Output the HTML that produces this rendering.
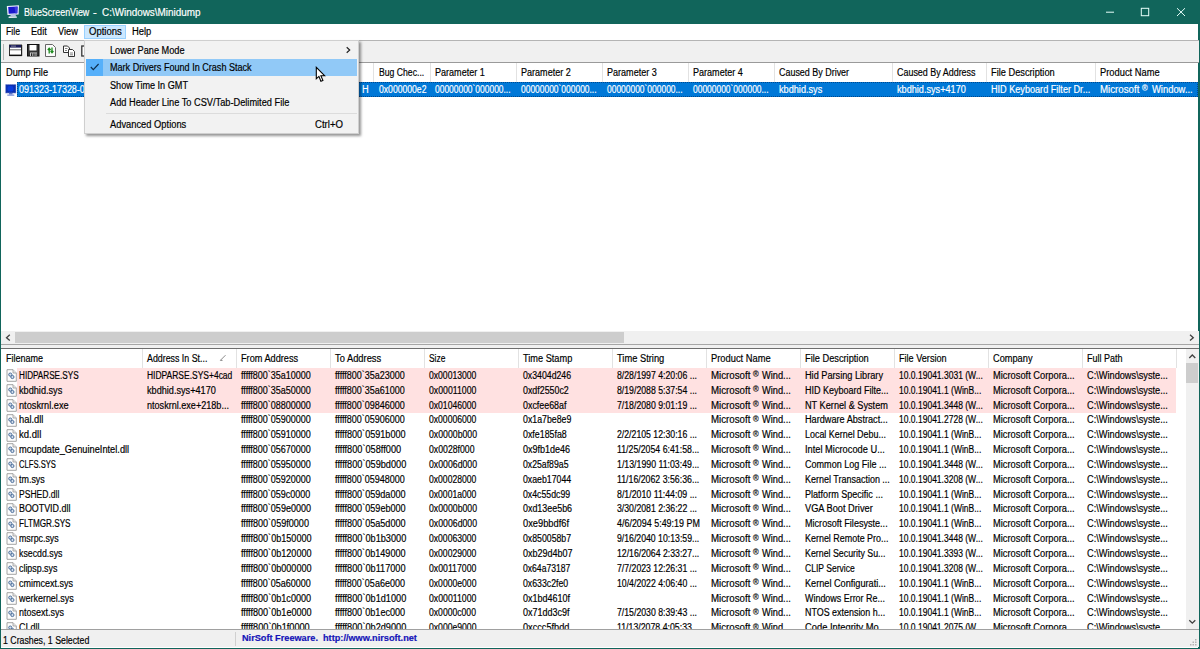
<!DOCTYPE html>
<html lang="en"><head><meta charset="utf-8"><title>BlueScreenView - C:\Windows\Minidump</title>
<style>
html,body{margin:0;padding:0;width:1200px;height:649px;overflow:hidden;background:#fff}
body{font-family:"Liberation Sans",sans-serif;font-size:10.0px;color:#000;position:relative}
.a{position:absolute}
.t{position:absolute;white-space:pre;line-height:14px;height:14px;transform-origin:0 50%;-webkit-text-stroke:.18px currentColor}
.w{color:#fff}
.r{font-size:6.500px;position:relative;top:-2.500px}
</style></head><body>

<div class="a" style="left:0px;top:0px;width:1200px;height:649px;background:#11655b;"></div>
<div class="a" style="left:1.3px;top:23.75px;width:1197.2px;height:623.75px;background:#fff;"></div>
<svg class="a" style="left:6px;top:5px" width="14" height="14" viewBox="0 0 14 14">
<path d="M.800 1L13 .300L12.600 9.500L1.500 10Z" fill="#eef0ff"/>
<path d="M2.200 2.100L11.600 1.600L11.300 8.300L2.700 8.700Z" fill="#1818cc"/>
<path d="M8.500 2L11.600 1.700L11.300 8.300L9.500 8.400Z" fill="#3a3ae0"/>
<path d="M5 9.500L9.500 9.300L10 11.300L4 11.600Z" fill="#b8c0e8"/>
<path d="M2.800 11.500L10.500 11.200L11 12.800L2.500 13.100Z" fill="#eef0fa"/>
</svg>
<span class="t w" style="left:23.6px;top:6.20px;transform:scaleX(0.892);">BlueScreenView</span>
<span class="t w" style="left:92.8px;top:6.20px;transform:scaleX(1.126);">-</span>
<span class="t w" style="left:102.4px;top:6.20px;transform:scaleX(0.990);">C:\Windows\Minidump</span>
<svg class="a" style="left:1100px;top:0" width="100" height="24" viewBox="0 0 100 24">
<path d="M6 12.200H14" stroke="#e8fffb" stroke-width="1" fill="none"/>
<rect x="41.300" y="8.300" width="7.400" height="7.400" stroke="#e8fffb" stroke-width="1" fill="none"/>
<path d="M77 8.200L85 16M85 8.200L77 16" stroke="#e8fffb" stroke-width="1" fill="none"/>
</svg>
<div class="a" style="left:83.75px;top:24.5px;width:42.5px;height:14.8px;background:#cce8ff;box-shadow:inset 0 0 0 1px #99d1ff"></div>
<span class="t" style="left:6.2px;top:24.70px;transform:scaleX(0.870);">File</span>
<span class="t" style="left:31.2px;top:24.70px;transform:scaleX(0.911);">Edit</span>
<span class="t" style="left:58px;top:24.70px;transform:scaleX(0.920);">View</span>
<span class="t" style="left:88.8px;top:24.70px;transform:scaleX(0.952);">Options</span>
<span class="t" style="left:132.2px;top:24.70px;transform:scaleX(0.940);">Help</span>
<div class="a" style="left:1px;top:40px;width:1197.5px;height:22.5px;background:#f0f0f0;"></div>
<div class="a" style="left:1px;top:40px;width:1197.5px;height:1px;background:#b4b4b4;"></div>
<div class="a" style="left:1px;top:62px;width:1197.5px;height:1px;background:#9a9a9a;"></div>
<div class="a" style="left:2.5px;top:44px;width:1px;height:16px;background:#b4b4b4;"></div>
<svg class="a" style="left:8px;top:43px" width="80" height="16" viewBox="0 0 80 16">
<g>
<rect x="1.500" y="2" width="12" height="10.500" fill="#fff" stroke="#333" stroke-width="1"/>
<rect x="1.500" y="2" width="12" height="2.600" fill="#1a1a5a"/>
<rect x="3" y="2.700" width="5" height=".800" fill="#99a"/>
<rect x="2" y="6.300" width="11" height="1" fill="#666"/>
<rect x="1.500" y="11.600" width="12.500" height="1.500" fill="#111"/>
<rect x="13" y="2" width="1.200" height="11" fill="#222"/>
</g>
<g transform="translate(18,0)">
<rect x="1.500" y="1.500" width="11.500" height="11.500" fill="#333" stroke="#111"/>
<rect x="3.500" y="2" width="7" height="5.500" fill="#fff"/>
<rect x="4" y="9.500" width="7" height="3.500" fill="#ccc"/>
<rect x="5" y="10.300" width="1.300" height="2.700" fill="#222"/><rect x="7.300" y="10.300" width="1.300" height="2.700" fill="#222"/><rect x="9.500" y="10.300" width="1" height="2.700" fill="#222"/>
</g>
<g transform="translate(36,0)">
<path d="M1.500 1.500H8.500L11.500 4.500V13.500H1.500Z" fill="#fbfbfb" stroke="#666"/>
<path d="M5.200 10.500V5.500M3.800 7L5.200 5.200L6.600 7" stroke="#1e8a1e" stroke-width="1.300" fill="none"/>
<path d="M8 4.500V9.500M6.600 8L8 9.800L9.400 8" stroke="#1e8a1e" stroke-width="1.300" fill="none"/>
</g>
<g transform="translate(54,0)">
<path d="M1.500 3H5.500L7.500 5V9.500H1.500Z" fill="#fff" stroke="#333"/>
<path d="M6.500 6.500H10.500L12.500 8.500V13.500H6.500Z" fill="#fff" stroke="#333"/>
<path d="M3 5.500h2.500M3 7.500h2M8 10h3M8 11.800h3" stroke="#666" stroke-width=".8"/>
</g>
<g transform="translate(72,0)"><rect x="1.800" y="3" width="8" height="10" fill="#fff" stroke="#333" stroke-width="1.300"/></g>
</svg>
<div class="a" style="left:373px;top:63px;width:1px;height:18.5px;background:#e2e2e2;"></div>
<div class="a" style="left:430px;top:63px;width:1px;height:18.5px;background:#e2e2e2;"></div>
<div class="a" style="left:516px;top:63px;width:1px;height:18.5px;background:#e2e2e2;"></div>
<div class="a" style="left:602px;top:63px;width:1px;height:18.5px;background:#e2e2e2;"></div>
<div class="a" style="left:688px;top:63px;width:1px;height:18.5px;background:#e2e2e2;"></div>
<div class="a" style="left:774px;top:63px;width:1px;height:18.5px;background:#e2e2e2;"></div>
<div class="a" style="left:892px;top:63px;width:1px;height:18.5px;background:#e2e2e2;"></div>
<div class="a" style="left:986px;top:63px;width:1px;height:18.5px;background:#e2e2e2;"></div>
<div class="a" style="left:1095px;top:63px;width:1px;height:18.5px;background:#e2e2e2;"></div>
<span class="t" style="left:6.2px;top:65.80px;transform:scaleX(0.923);">Dump File</span>
<span class="t" style="left:378.6px;top:65.80px;transform:scaleX(0.865);">Bug Chec...</span>
<span class="t" style="left:435px;top:65.80px;transform:scaleX(0.904);">Parameter 1</span>
<span class="t" style="left:521px;top:65.80px;transform:scaleX(0.904);">Parameter 2</span>
<span class="t" style="left:607px;top:65.80px;transform:scaleX(0.904);">Parameter 3</span>
<span class="t" style="left:693px;top:65.80px;transform:scaleX(0.904);">Parameter 4</span>
<span class="t" style="left:779px;top:65.80px;transform:scaleX(0.894);">Caused By Driver</span>
<span class="t" style="left:897px;top:65.80px;transform:scaleX(0.894);">Caused By Address</span>
<span class="t" style="left:991px;top:65.80px;transform:scaleX(0.924);">File Description</span>
<span class="t" style="left:1100.3px;top:65.80px;transform:scaleX(0.933);">Product Name</span>
<div class="a" style="left:17.3px;top:81.8px;width:1180.7px;height:14.8px;background:#0078d7;outline:1px dotted rgba(0,25,70,.5);outline-offset:-1px"></div>
<svg class="a" style="left:5px;top:83.500px" width="12" height="13" viewBox="0 0 12 13">
<rect x="0.400" y="0.300" width="10.700" height="8.900" fill="#2b47b4"/>
<rect x="1.100" y="1" width="9.300" height="7.500" fill="#0a2fb0"/>
<rect x="2.500" y="2" width="6" height="5.500" rx="2" fill="#0a3cdc"/>
<rect x="0.400" y="0.300" width="10.700" height="8.900" fill="none" stroke="#c8d2f0" stroke-width=".7" stroke-dasharray="1 1" opacity=".8"/>
<rect x="4" y="9.200" width="3.500" height="1.300" fill="#3a57c0"/><rect x="2.300" y="10.500" width="7" height="1.300" fill="#7f93da"/>
</svg>
<span class="t w" style="left:19px;top:83.00px;transform:scaleX(0.897);">091323-17328-01.dmp</span>
<span class="t w" style="left:378.6px;top:83.00px;transform:scaleX(0.862);">0x000000e2</span>
<span class="t w" style="left:435px;top:83.00px;transform:scaleX(0.844);">00000000`000000...</span>
<span class="t w" style="left:521px;top:83.00px;transform:scaleX(0.844);">00000000`000000...</span>
<span class="t w" style="left:607px;top:83.00px;transform:scaleX(0.844);">00000000`000000...</span>
<span class="t w" style="left:693px;top:83.00px;transform:scaleX(0.844);">00000000`000000...</span>
<span class="t w" style="left:779px;top:83.00px;transform:scaleX(0.916);">kbdhid.sys</span>
<span class="t w" style="left:897px;top:83.00px;transform:scaleX(0.914);">kbdhid.sys+4170</span>
<span class="t w" style="left:991px;top:83.00px;transform:scaleX(0.911);">HID Keyboard Filter Dr...</span>
<span class="t w" style="left:1100.3px;top:83.00px;transform:scaleX(0.970);">Microsoft</span>
<span class="t w" style="left:1141.5px;top:81.40px;transform:scaleX(0.896);font-size:8.500px">®</span>
<span class="t w" style="left:1151.5px;top:83.00px;transform:scaleX(0.939);">Window...</span>
<span class="t w" style="left:237.121px;top:83.00px;transform:scaleX(0.858);">MANUALLY_INITIATED_CRAS</span>
<span class="t w" style="left:361.6px;top:83.00px;transform:scaleX(0.922);">H</span>
<span class="t w" style="left:124px;top:83.00px;transform:scaleX(0.890);">9/13/2023 8:41:23 PM</span>
<div class="a" style="left:1px;top:331.3px;width:1197.5px;height:12.6px;background:#f0f0f0;"></div>
<div class="a" style="left:15px;top:331.8px;width:609px;height:11.6px;background:#cdcdcd;"></div>
<svg class="a" style="left:1px;top:331px" width="14" height="13"><path d="M8.800 3.800L5.500 6.700l3.300 2.900" stroke="#404040" stroke-width="1.300" fill="none"/></svg>
<svg class="a" style="left:1185px;top:331px" width="14" height="13"><path d="M5 3.800L8.300 6.700 5 9.600" stroke="#404040" stroke-width="1.300" fill="none"/></svg>
<div class="a" style="left:1px;top:344px;width:1197.5px;height:4.5px;background:#f0f0f0;"></div>
<div class="a" style="left:1px;top:344px;width:1197.5px;height:1px;background:#a6a6a6;"></div>
<div class="a" style="left:1px;top:348px;width:1197.5px;height:1px;background:#6e6e6e;"></div>
<div class="a" style="left:142px;top:349px;width:1px;height:18.5px;background:#e2e2e2;"></div>
<div class="a" style="left:236px;top:349px;width:1px;height:18.5px;background:#e2e2e2;"></div>
<div class="a" style="left:330px;top:349px;width:1px;height:18.5px;background:#e2e2e2;"></div>
<div class="a" style="left:424px;top:349px;width:1px;height:18.5px;background:#e2e2e2;"></div>
<div class="a" style="left:518px;top:349px;width:1px;height:18.5px;background:#e2e2e2;"></div>
<div class="a" style="left:612px;top:349px;width:1px;height:18.5px;background:#e2e2e2;"></div>
<div class="a" style="left:706px;top:349px;width:1px;height:18.5px;background:#e2e2e2;"></div>
<div class="a" style="left:800px;top:349px;width:1px;height:18.5px;background:#e2e2e2;"></div>
<div class="a" style="left:894px;top:349px;width:1px;height:18.5px;background:#e2e2e2;"></div>
<div class="a" style="left:988px;top:349px;width:1px;height:18.5px;background:#e2e2e2;"></div>
<div class="a" style="left:1082px;top:349px;width:1px;height:18.5px;background:#e2e2e2;"></div>
<div class="a" style="left:1176px;top:349px;width:1px;height:18.5px;background:#e2e2e2;"></div>
<span class="t" style="left:6.2px;top:351.50px;transform:scaleX(0.901);">Filename</span>
<span class="t" style="left:147.4px;top:351.50px;transform:scaleX(0.883);">Address In St...</span>
<span class="t" style="left:241.4px;top:351.50px;transform:scaleX(0.918);">From Address</span>
<span class="t" style="left:335.4px;top:351.50px;transform:scaleX(0.933);">To Address</span>
<span class="t" style="left:429.4px;top:351.50px;transform:scaleX(0.843);">Size</span>
<span class="t" style="left:523.4px;top:351.50px;transform:scaleX(0.920);">Time Stamp</span>
<span class="t" style="left:617.4px;top:351.50px;transform:scaleX(0.931);">Time String</span>
<span class="t" style="left:711.4px;top:351.50px;transform:scaleX(0.933);">Product Name</span>
<span class="t" style="left:805.4px;top:351.50px;transform:scaleX(0.924);">File Description</span>
<span class="t" style="left:899.4px;top:351.50px;transform:scaleX(0.911);">File Version</span>
<span class="t" style="left:993.4px;top:351.50px;transform:scaleX(0.923);">Company</span>
<span class="t" style="left:1087.4px;top:351.50px;transform:scaleX(0.899);">Full Path</span>
<svg class="a" style="left:219px;top:354px" width="9" height="8"><path d="M1.500 6.200L6.500 1.200" stroke="#8a8a8a" stroke-width="1" fill="none"/><path d="M1.200 6.400h2.300" stroke="#8a8a8a" stroke-width="1"/></svg>
<div class="a" style="left:17px;top:368.1px;width:1159.3px;height:14.9px;background:#ffe1e1;"></div>
<svg class="a" style="left:5.500px;top:369.10px" width="12" height="13" viewBox="0 0 12 13"><path d="M1 .700H7L10.300 4V12.300H1Z" fill="#fdfdfd" stroke="#9a9a9a" stroke-width=".9"/><path d="M7 .700V4H10.300" fill="#e8e8e8" stroke="#9a9a9a" stroke-width=".8"/><circle cx="4.300" cy="5.600" r="1.600" fill="#d5deea" stroke="#4b6f9c" stroke-width="1"/><circle cx="6.400" cy="8" r="1.600" fill="#d5deea" stroke="#4b6f9c" stroke-width="1"/></svg>
<span class="t" style="left:19px;top:368.80px;transform:scaleX(0.814);">HIDPARSE.SYS</span>
<span class="t" style="left:147.4px;top:368.80px;transform:scaleX(0.847);">HIDPARSE.SYS+4cad</span>
<span class="t" style="left:241.4px;top:368.80px;transform:scaleX(0.898);">fffff800`35a10000</span>
<span class="t" style="left:335.4px;top:368.80px;transform:scaleX(0.898);">fffff800`35a23000</span>
<span class="t" style="left:429.4px;top:368.80px;transform:scaleX(0.860);">0x00013000</span>
<span class="t" style="left:523.4px;top:368.80px;transform:scaleX(0.873);">0x3404d246</span>
<span class="t" style="left:617.4px;top:368.80px;transform:scaleX(0.872);">8/28/1997 4:20:06 ...</span>
<span class="t" style="left:711.4px;top:368.80px;transform:scaleX(0.970);">Microsoft</span>
<span class="t" style="left:752.6px;top:367.20px;transform:scaleX(0.896);font-size:8.500px">®</span>
<span class="t" style="left:762.2px;top:368.80px;transform:scaleX(0.926);">Wind...</span>
<span class="t" style="left:805.4px;top:368.80px;transform:scaleX(0.917);">Hid Parsing Library</span>
<span class="t" style="left:899.4px;top:368.80px;transform:scaleX(0.851);">10.0.19041.3031 (W...</span>
<span class="t" style="left:993.4px;top:368.80px;transform:scaleX(0.930);">Microsoft Corpora...</span>
<span class="t" style="left:1087.4px;top:368.80px;transform:scaleX(0.921);">C:\Windows\syste...</span>
<div class="a" style="left:17px;top:382.95px;width:1159.3px;height:14.9px;background:#ffe1e1;"></div>
<svg class="a" style="left:5.500px;top:383.95px" width="12" height="13" viewBox="0 0 12 13"><path d="M1 .700H7L10.300 4V12.300H1Z" fill="#fdfdfd" stroke="#9a9a9a" stroke-width=".9"/><path d="M7 .700V4H10.300" fill="#e8e8e8" stroke="#9a9a9a" stroke-width=".8"/><circle cx="4.300" cy="5.600" r="1.600" fill="#d5deea" stroke="#4b6f9c" stroke-width="1"/><circle cx="6.400" cy="8" r="1.600" fill="#d5deea" stroke="#4b6f9c" stroke-width="1"/></svg>
<span class="t" style="left:19px;top:383.65px;transform:scaleX(0.916);">kbdhid.sys</span>
<span class="t" style="left:147.4px;top:383.65px;transform:scaleX(0.914);">kbdhid.sys+4170</span>
<span class="t" style="left:241.4px;top:383.65px;transform:scaleX(0.898);">fffff800`35a50000</span>
<span class="t" style="left:335.4px;top:383.65px;transform:scaleX(0.898);">fffff800`35a61000</span>
<span class="t" style="left:429.4px;top:383.65px;transform:scaleX(0.872);">0x00011000</span>
<span class="t" style="left:523.4px;top:383.65px;transform:scaleX(0.885);">0xdf2550c2</span>
<span class="t" style="left:617.4px;top:383.65px;transform:scaleX(0.872);">8/19/2088 5:37:54 ...</span>
<span class="t" style="left:711.4px;top:383.65px;transform:scaleX(0.970);">Microsoft</span>
<span class="t" style="left:752.6px;top:382.05px;transform:scaleX(0.896);font-size:8.500px">®</span>
<span class="t" style="left:762.2px;top:383.65px;transform:scaleX(0.926);">Wind...</span>
<span class="t" style="left:805.4px;top:383.65px;transform:scaleX(0.900);">HID Keyboard Filte...</span>
<span class="t" style="left:899.4px;top:383.65px;transform:scaleX(0.851);">10.0.19041.1 (WinB...</span>
<span class="t" style="left:993.4px;top:383.65px;transform:scaleX(0.930);">Microsoft Corpora...</span>
<span class="t" style="left:1087.4px;top:383.65px;transform:scaleX(0.921);">C:\Windows\syste...</span>
<div class="a" style="left:17px;top:397.8px;width:1159.3px;height:14.9px;background:#ffe1e1;"></div>
<svg class="a" style="left:5.500px;top:398.80px" width="12" height="13" viewBox="0 0 12 13"><path d="M1 .700H7L10.300 4V12.300H1Z" fill="#fdfdfd" stroke="#9a9a9a" stroke-width=".9"/><path d="M7 .700V4H10.300" fill="#e8e8e8" stroke="#9a9a9a" stroke-width=".8"/><circle cx="4.300" cy="5.600" r="1.600" fill="#d5deea" stroke="#4b6f9c" stroke-width="1"/><circle cx="6.400" cy="8" r="1.600" fill="#d5deea" stroke="#4b6f9c" stroke-width="1"/></svg>
<span class="t" style="left:19px;top:398.50px;transform:scaleX(0.920);">ntoskrnl.exe</span>
<span class="t" style="left:147.4px;top:398.50px;transform:scaleX(0.907);">ntoskrnl.exe+218b...</span>
<span class="t" style="left:241.4px;top:398.50px;transform:scaleX(0.899);">fffff800`08800000</span>
<span class="t" style="left:335.4px;top:398.50px;transform:scaleX(0.899);">fffff800`09846000</span>
<span class="t" style="left:429.4px;top:398.50px;transform:scaleX(0.860);">0x01046000</span>
<span class="t" style="left:523.4px;top:398.50px;transform:scaleX(0.888);">0xcfee68af</span>
<span class="t" style="left:617.4px;top:398.50px;transform:scaleX(0.872);">7/18/2080 9:01:19 ...</span>
<span class="t" style="left:711.4px;top:398.50px;transform:scaleX(0.970);">Microsoft</span>
<span class="t" style="left:752.6px;top:396.90px;transform:scaleX(0.896);font-size:8.500px">®</span>
<span class="t" style="left:762.2px;top:398.50px;transform:scaleX(0.926);">Wind...</span>
<span class="t" style="left:805.4px;top:398.50px;transform:scaleX(0.917);">NT Kernel &amp; System</span>
<span class="t" style="left:899.4px;top:398.50px;transform:scaleX(0.851);">10.0.19041.3448 (W...</span>
<span class="t" style="left:993.4px;top:398.50px;transform:scaleX(0.930);">Microsoft Corpora...</span>
<span class="t" style="left:1087.4px;top:398.50px;transform:scaleX(0.921);">C:\Windows\syste...</span>
<svg class="a" style="left:5.500px;top:413.65px" width="12" height="13" viewBox="0 0 12 13"><path d="M1 .700H7L10.300 4V12.300H1Z" fill="#fdfdfd" stroke="#9a9a9a" stroke-width=".9"/><path d="M7 .700V4H10.300" fill="#e8e8e8" stroke="#9a9a9a" stroke-width=".8"/><circle cx="4.300" cy="5.600" r="1.600" fill="#d5deea" stroke="#4b6f9c" stroke-width="1"/><circle cx="6.400" cy="8" r="1.600" fill="#d5deea" stroke="#4b6f9c" stroke-width="1"/></svg>
<span class="t" style="left:19px;top:413.35px;transform:scaleX(0.935);">hal.dll</span>
<span class="t" style="left:241.4px;top:413.35px;transform:scaleX(0.899);">fffff800`05900000</span>
<span class="t" style="left:335.4px;top:413.35px;transform:scaleX(0.899);">fffff800`05906000</span>
<span class="t" style="left:429.4px;top:413.35px;transform:scaleX(0.860);">0x00006000</span>
<span class="t" style="left:523.4px;top:413.35px;transform:scaleX(0.877);">0x1a7be8e9</span>
<span class="t" style="left:711.4px;top:413.35px;transform:scaleX(0.970);">Microsoft</span>
<span class="t" style="left:752.6px;top:411.75px;transform:scaleX(0.896);font-size:8.500px">®</span>
<span class="t" style="left:762.2px;top:413.35px;transform:scaleX(0.926);">Wind...</span>
<span class="t" style="left:805.4px;top:413.35px;transform:scaleX(0.914);">Hardware Abstract...</span>
<span class="t" style="left:899.4px;top:413.35px;transform:scaleX(0.851);">10.0.19041.2728 (W...</span>
<span class="t" style="left:993.4px;top:413.35px;transform:scaleX(0.930);">Microsoft Corpora...</span>
<span class="t" style="left:1087.4px;top:413.35px;transform:scaleX(0.921);">C:\Windows\syste...</span>
<svg class="a" style="left:5.500px;top:428.50px" width="12" height="13" viewBox="0 0 12 13"><path d="M1 .700H7L10.300 4V12.300H1Z" fill="#fdfdfd" stroke="#9a9a9a" stroke-width=".9"/><path d="M7 .700V4H10.300" fill="#e8e8e8" stroke="#9a9a9a" stroke-width=".8"/><circle cx="4.300" cy="5.600" r="1.600" fill="#d5deea" stroke="#4b6f9c" stroke-width="1"/><circle cx="6.400" cy="8" r="1.600" fill="#d5deea" stroke="#4b6f9c" stroke-width="1"/></svg>
<span class="t" style="left:19px;top:428.20px;transform:scaleX(0.953);">kd.dll</span>
<span class="t" style="left:241.4px;top:428.20px;transform:scaleX(0.899);">fffff800`05910000</span>
<span class="t" style="left:335.4px;top:428.20px;transform:scaleX(0.908);">fffff800`0591b000</span>
<span class="t" style="left:429.4px;top:428.20px;transform:scaleX(0.873);">0x0000b000</span>
<span class="t" style="left:523.4px;top:428.20px;transform:scaleX(0.884);">0xfe185fa8</span>
<span class="t" style="left:617.4px;top:428.20px;transform:scaleX(0.872);">2/2/2105 12:30:16 ...</span>
<span class="t" style="left:711.4px;top:428.20px;transform:scaleX(0.970);">Microsoft</span>
<span class="t" style="left:752.6px;top:426.60px;transform:scaleX(0.896);font-size:8.500px">®</span>
<span class="t" style="left:762.2px;top:428.20px;transform:scaleX(0.926);">Wind...</span>
<span class="t" style="left:805.4px;top:428.20px;transform:scaleX(0.893);">Local Kernel Debu...</span>
<span class="t" style="left:899.4px;top:428.20px;transform:scaleX(0.851);">10.0.19041.1 (WinB...</span>
<span class="t" style="left:993.4px;top:428.20px;transform:scaleX(0.930);">Microsoft Corpora...</span>
<span class="t" style="left:1087.4px;top:428.20px;transform:scaleX(0.921);">C:\Windows\syste...</span>
<svg class="a" style="left:5.500px;top:443.35px" width="12" height="13" viewBox="0 0 12 13"><path d="M1 .700H7L10.300 4V12.300H1Z" fill="#fdfdfd" stroke="#9a9a9a" stroke-width=".9"/><path d="M7 .700V4H10.300" fill="#e8e8e8" stroke="#9a9a9a" stroke-width=".8"/><circle cx="4.300" cy="5.600" r="1.600" fill="#d5deea" stroke="#4b6f9c" stroke-width="1"/><circle cx="6.400" cy="8" r="1.600" fill="#d5deea" stroke="#4b6f9c" stroke-width="1"/></svg>
<span class="t" style="left:19px;top:443.05px;transform:scaleX(0.926);">mcupdate_GenuineIntel.dll</span>
<span class="t" style="left:241.4px;top:443.05px;transform:scaleX(0.899);">fffff800`05670000</span>
<span class="t" style="left:335.4px;top:443.05px;transform:scaleX(0.919);">fffff800`058ff000</span>
<span class="t" style="left:429.4px;top:443.05px;transform:scaleX(0.871);">0x0028f000</span>
<span class="t" style="left:523.4px;top:443.05px;transform:scaleX(0.901);">0x9fb1de46</span>
<span class="t" style="left:617.4px;top:443.05px;transform:scaleX(0.877);">11/25/2054 6:41:58...</span>
<span class="t" style="left:711.4px;top:443.05px;transform:scaleX(0.970);">Microsoft</span>
<span class="t" style="left:752.6px;top:441.45px;transform:scaleX(0.896);font-size:8.500px">®</span>
<span class="t" style="left:762.2px;top:443.05px;transform:scaleX(0.926);">Wind...</span>
<span class="t" style="left:805.4px;top:443.05px;transform:scaleX(0.927);">Intel Microcode U...</span>
<span class="t" style="left:899.4px;top:443.05px;transform:scaleX(0.851);">10.0.19041.1 (WinB...</span>
<span class="t" style="left:993.4px;top:443.05px;transform:scaleX(0.930);">Microsoft Corpora...</span>
<span class="t" style="left:1087.4px;top:443.05px;transform:scaleX(0.921);">C:\Windows\syste...</span>
<svg class="a" style="left:5.500px;top:458.20px" width="12" height="13" viewBox="0 0 12 13"><path d="M1 .700H7L10.300 4V12.300H1Z" fill="#fdfdfd" stroke="#9a9a9a" stroke-width=".9"/><path d="M7 .700V4H10.300" fill="#e8e8e8" stroke="#9a9a9a" stroke-width=".8"/><circle cx="4.300" cy="5.600" r="1.600" fill="#d5deea" stroke="#4b6f9c" stroke-width="1"/><circle cx="6.400" cy="8" r="1.600" fill="#d5deea" stroke="#4b6f9c" stroke-width="1"/></svg>
<span class="t" style="left:19px;top:457.90px;transform:scaleX(0.764);">CLFS.SYS</span>
<span class="t" style="left:241.4px;top:457.90px;transform:scaleX(0.899);">fffff800`05950000</span>
<span class="t" style="left:335.4px;top:457.90px;transform:scaleX(0.917);">fffff800`059bd000</span>
<span class="t" style="left:429.4px;top:457.90px;transform:scaleX(0.873);">0x0006d000</span>
<span class="t" style="left:523.4px;top:457.90px;transform:scaleX(0.870);">0x25af89a5</span>
<span class="t" style="left:617.4px;top:457.90px;transform:scaleX(0.877);">1/13/1990 11:03:49...</span>
<span class="t" style="left:711.4px;top:457.90px;transform:scaleX(0.970);">Microsoft</span>
<span class="t" style="left:752.6px;top:456.30px;transform:scaleX(0.896);font-size:8.500px">®</span>
<span class="t" style="left:762.2px;top:457.90px;transform:scaleX(0.926);">Wind...</span>
<span class="t" style="left:805.4px;top:457.90px;transform:scaleX(0.905);">Common Log File ...</span>
<span class="t" style="left:899.4px;top:457.90px;transform:scaleX(0.851);">10.0.19041.3448 (W...</span>
<span class="t" style="left:993.4px;top:457.90px;transform:scaleX(0.930);">Microsoft Corpora...</span>
<span class="t" style="left:1087.4px;top:457.90px;transform:scaleX(0.921);">C:\Windows\syste...</span>
<svg class="a" style="left:5.500px;top:473.05px" width="12" height="13" viewBox="0 0 12 13"><path d="M1 .700H7L10.300 4V12.300H1Z" fill="#fdfdfd" stroke="#9a9a9a" stroke-width=".9"/><path d="M7 .700V4H10.300" fill="#e8e8e8" stroke="#9a9a9a" stroke-width=".8"/><circle cx="4.300" cy="5.600" r="1.600" fill="#d5deea" stroke="#4b6f9c" stroke-width="1"/><circle cx="6.400" cy="8" r="1.600" fill="#d5deea" stroke="#4b6f9c" stroke-width="1"/></svg>
<span class="t" style="left:19px;top:472.75px;transform:scaleX(0.892);">tm.sys</span>
<span class="t" style="left:241.4px;top:472.75px;transform:scaleX(0.899);">fffff800`05920000</span>
<span class="t" style="left:335.4px;top:472.75px;transform:scaleX(0.899);">fffff800`05948000</span>
<span class="t" style="left:429.4px;top:472.75px;transform:scaleX(0.860);">0x00028000</span>
<span class="t" style="left:523.4px;top:472.75px;transform:scaleX(0.875);">0xaeb17044</span>
<span class="t" style="left:617.4px;top:472.75px;transform:scaleX(0.877);">11/16/2062 3:56:36...</span>
<span class="t" style="left:711.4px;top:472.75px;transform:scaleX(0.970);">Microsoft</span>
<span class="t" style="left:752.6px;top:471.15px;transform:scaleX(0.896);font-size:8.500px">®</span>
<span class="t" style="left:762.2px;top:472.75px;transform:scaleX(0.926);">Wind...</span>
<span class="t" style="left:805.4px;top:472.75px;transform:scaleX(0.898);">Kernel Transaction ...</span>
<span class="t" style="left:899.4px;top:472.75px;transform:scaleX(0.851);">10.0.19041.3208 (W...</span>
<span class="t" style="left:993.4px;top:472.75px;transform:scaleX(0.930);">Microsoft Corpora...</span>
<span class="t" style="left:1087.4px;top:472.75px;transform:scaleX(0.921);">C:\Windows\syste...</span>
<svg class="a" style="left:5.500px;top:487.90px" width="12" height="13" viewBox="0 0 12 13"><path d="M1 .700H7L10.300 4V12.300H1Z" fill="#fdfdfd" stroke="#9a9a9a" stroke-width=".9"/><path d="M7 .700V4H10.300" fill="#e8e8e8" stroke="#9a9a9a" stroke-width=".8"/><circle cx="4.300" cy="5.600" r="1.600" fill="#d5deea" stroke="#4b6f9c" stroke-width="1"/><circle cx="6.400" cy="8" r="1.600" fill="#d5deea" stroke="#4b6f9c" stroke-width="1"/></svg>
<span class="t" style="left:19px;top:487.60px;transform:scaleX(0.853);">PSHED.dll</span>
<span class="t" style="left:241.4px;top:487.60px;transform:scaleX(0.899);">fffff800`059c0000</span>
<span class="t" style="left:335.4px;top:487.60px;transform:scaleX(0.908);">fffff800`059da000</span>
<span class="t" style="left:429.4px;top:487.60px;transform:scaleX(0.860);">0x0001a000</span>
<span class="t" style="left:523.4px;top:487.60px;transform:scaleX(0.875);">0x4c55dc99</span>
<span class="t" style="left:617.4px;top:487.60px;transform:scaleX(0.879);">8/1/2010 11:44:09 ...</span>
<span class="t" style="left:711.4px;top:487.60px;transform:scaleX(0.970);">Microsoft</span>
<span class="t" style="left:752.6px;top:486.00px;transform:scaleX(0.896);font-size:8.500px">®</span>
<span class="t" style="left:762.2px;top:487.60px;transform:scaleX(0.926);">Wind...</span>
<span class="t" style="left:805.4px;top:487.60px;transform:scaleX(0.905);">Platform Specific ...</span>
<span class="t" style="left:899.4px;top:487.60px;transform:scaleX(0.851);">10.0.19041.1 (WinB...</span>
<span class="t" style="left:993.4px;top:487.60px;transform:scaleX(0.930);">Microsoft Corpora...</span>
<span class="t" style="left:1087.4px;top:487.60px;transform:scaleX(0.921);">C:\Windows\syste...</span>
<svg class="a" style="left:5.500px;top:502.75px" width="12" height="13" viewBox="0 0 12 13"><path d="M1 .700H7L10.300 4V12.300H1Z" fill="#fdfdfd" stroke="#9a9a9a" stroke-width=".9"/><path d="M7 .700V4H10.300" fill="#e8e8e8" stroke="#9a9a9a" stroke-width=".8"/><circle cx="4.300" cy="5.600" r="1.600" fill="#d5deea" stroke="#4b6f9c" stroke-width="1"/><circle cx="6.400" cy="8" r="1.600" fill="#d5deea" stroke="#4b6f9c" stroke-width="1"/></svg>
<span class="t" style="left:19px;top:502.45px;transform:scaleX(0.889);">BOOTVID.dll</span>
<span class="t" style="left:241.4px;top:502.45px;transform:scaleX(0.900);">fffff800`059e0000</span>
<span class="t" style="left:335.4px;top:502.45px;transform:scaleX(0.910);">fffff800`059eb000</span>
<span class="t" style="left:429.4px;top:502.45px;transform:scaleX(0.873);">0x0000b000</span>
<span class="t" style="left:523.4px;top:502.45px;transform:scaleX(0.891);">0xd13ee5b6</span>
<span class="t" style="left:617.4px;top:502.45px;transform:scaleX(0.872);">3/30/2081 2:36:22 ...</span>
<span class="t" style="left:711.4px;top:502.45px;transform:scaleX(0.970);">Microsoft</span>
<span class="t" style="left:752.6px;top:500.85px;transform:scaleX(0.896);font-size:8.500px">®</span>
<span class="t" style="left:762.2px;top:502.45px;transform:scaleX(0.926);">Wind...</span>
<span class="t" style="left:805.4px;top:502.45px;transform:scaleX(0.923);">VGA Boot Driver</span>
<span class="t" style="left:899.4px;top:502.45px;transform:scaleX(0.851);">10.0.19041.1 (WinB...</span>
<span class="t" style="left:993.4px;top:502.45px;transform:scaleX(0.930);">Microsoft Corpora...</span>
<span class="t" style="left:1087.4px;top:502.45px;transform:scaleX(0.921);">C:\Windows\syste...</span>
<svg class="a" style="left:5.500px;top:517.60px" width="12" height="13" viewBox="0 0 12 13"><path d="M1 .700H7L10.300 4V12.300H1Z" fill="#fdfdfd" stroke="#9a9a9a" stroke-width=".9"/><path d="M7 .700V4H10.300" fill="#e8e8e8" stroke="#9a9a9a" stroke-width=".8"/><circle cx="4.300" cy="5.600" r="1.600" fill="#d5deea" stroke="#4b6f9c" stroke-width="1"/><circle cx="6.400" cy="8" r="1.600" fill="#d5deea" stroke="#4b6f9c" stroke-width="1"/></svg>
<span class="t" style="left:19px;top:517.30px;transform:scaleX(0.816);">FLTMGR.SYS</span>
<span class="t" style="left:241.4px;top:517.30px;transform:scaleX(0.907);">fffff800`059f0000</span>
<span class="t" style="left:335.4px;top:517.30px;transform:scaleX(0.908);">fffff800`05a5d000</span>
<span class="t" style="left:429.4px;top:517.30px;transform:scaleX(0.873);">0x0006d000</span>
<span class="t" style="left:523.4px;top:517.30px;transform:scaleX(0.929);">0xe9bbdf6f</span>
<span class="t" style="left:617.4px;top:517.30px;transform:scaleX(0.892);">4/6/2094 5:49:19 PM</span>
<span class="t" style="left:711.4px;top:517.30px;transform:scaleX(0.970);">Microsoft</span>
<span class="t" style="left:752.6px;top:515.70px;transform:scaleX(0.896);font-size:8.500px">®</span>
<span class="t" style="left:762.2px;top:517.30px;transform:scaleX(0.926);">Wind...</span>
<span class="t" style="left:805.4px;top:517.30px;transform:scaleX(0.907);">Microsoft Filesyste...</span>
<span class="t" style="left:899.4px;top:517.30px;transform:scaleX(0.851);">10.0.19041.1 (WinB...</span>
<span class="t" style="left:993.4px;top:517.30px;transform:scaleX(0.930);">Microsoft Corpora...</span>
<span class="t" style="left:1087.4px;top:517.30px;transform:scaleX(0.921);">C:\Windows\syste...</span>
<svg class="a" style="left:5.500px;top:532.45px" width="12" height="13" viewBox="0 0 12 13"><path d="M1 .700H7L10.300 4V12.300H1Z" fill="#fdfdfd" stroke="#9a9a9a" stroke-width=".9"/><path d="M7 .700V4H10.300" fill="#e8e8e8" stroke="#9a9a9a" stroke-width=".8"/><circle cx="4.300" cy="5.600" r="1.600" fill="#d5deea" stroke="#4b6f9c" stroke-width="1"/><circle cx="6.400" cy="8" r="1.600" fill="#d5deea" stroke="#4b6f9c" stroke-width="1"/></svg>
<span class="t" style="left:19px;top:532.15px;transform:scaleX(0.882);">msrpc.sys</span>
<span class="t" style="left:241.4px;top:532.15px;transform:scaleX(0.908);">fffff800`0b150000</span>
<span class="t" style="left:335.4px;top:532.15px;transform:scaleX(0.917);">fffff800`0b1b3000</span>
<span class="t" style="left:429.4px;top:532.15px;transform:scaleX(0.860);">0x00063000</span>
<span class="t" style="left:523.4px;top:532.15px;transform:scaleX(0.873);">0x850058b7</span>
<span class="t" style="left:617.4px;top:532.15px;transform:scaleX(0.870);">9/16/2040 10:13:59...</span>
<span class="t" style="left:711.4px;top:532.15px;transform:scaleX(0.970);">Microsoft</span>
<span class="t" style="left:752.6px;top:530.55px;transform:scaleX(0.896);font-size:8.500px">®</span>
<span class="t" style="left:762.2px;top:532.15px;transform:scaleX(0.926);">Wind...</span>
<span class="t" style="left:805.4px;top:532.15px;transform:scaleX(0.894);">Kernel Remote Pro...</span>
<span class="t" style="left:899.4px;top:532.15px;transform:scaleX(0.851);">10.0.19041.3448 (W...</span>
<span class="t" style="left:993.4px;top:532.15px;transform:scaleX(0.930);">Microsoft Corpora...</span>
<span class="t" style="left:1087.4px;top:532.15px;transform:scaleX(0.921);">C:\Windows\syste...</span>
<svg class="a" style="left:5.500px;top:547.30px" width="12" height="13" viewBox="0 0 12 13"><path d="M1 .700H7L10.300 4V12.300H1Z" fill="#fdfdfd" stroke="#9a9a9a" stroke-width=".9"/><path d="M7 .700V4H10.300" fill="#e8e8e8" stroke="#9a9a9a" stroke-width=".8"/><circle cx="4.300" cy="5.600" r="1.600" fill="#d5deea" stroke="#4b6f9c" stroke-width="1"/><circle cx="6.400" cy="8" r="1.600" fill="#d5deea" stroke="#4b6f9c" stroke-width="1"/></svg>
<span class="t" style="left:19px;top:547.00px;transform:scaleX(0.878);">ksecdd.sys</span>
<span class="t" style="left:241.4px;top:547.00px;transform:scaleX(0.908);">fffff800`0b120000</span>
<span class="t" style="left:335.4px;top:547.00px;transform:scaleX(0.908);">fffff800`0b149000</span>
<span class="t" style="left:429.4px;top:547.00px;transform:scaleX(0.860);">0x00029000</span>
<span class="t" style="left:523.4px;top:547.00px;transform:scaleX(0.900);">0xb29d4b07</span>
<span class="t" style="left:617.4px;top:547.00px;transform:scaleX(0.870);">12/16/2064 2:33:27...</span>
<span class="t" style="left:711.4px;top:547.00px;transform:scaleX(0.970);">Microsoft</span>
<span class="t" style="left:752.6px;top:545.40px;transform:scaleX(0.896);font-size:8.500px">®</span>
<span class="t" style="left:762.2px;top:547.00px;transform:scaleX(0.926);">Wind...</span>
<span class="t" style="left:805.4px;top:547.00px;transform:scaleX(0.882);">Kernel Security Su...</span>
<span class="t" style="left:899.4px;top:547.00px;transform:scaleX(0.851);">10.0.19041.3393 (W...</span>
<span class="t" style="left:993.4px;top:547.00px;transform:scaleX(0.930);">Microsoft Corpora...</span>
<span class="t" style="left:1087.4px;top:547.00px;transform:scaleX(0.921);">C:\Windows\syste...</span>
<svg class="a" style="left:5.500px;top:562.15px" width="12" height="13" viewBox="0 0 12 13"><path d="M1 .700H7L10.300 4V12.300H1Z" fill="#fdfdfd" stroke="#9a9a9a" stroke-width=".9"/><path d="M7 .700V4H10.300" fill="#e8e8e8" stroke="#9a9a9a" stroke-width=".8"/><circle cx="4.300" cy="5.600" r="1.600" fill="#d5deea" stroke="#4b6f9c" stroke-width="1"/><circle cx="6.400" cy="8" r="1.600" fill="#d5deea" stroke="#4b6f9c" stroke-width="1"/></svg>
<span class="t" style="left:19px;top:561.85px;transform:scaleX(0.886);">clipsp.sys</span>
<span class="t" style="left:241.4px;top:561.85px;transform:scaleX(0.908);">fffff800`0b000000</span>
<span class="t" style="left:335.4px;top:561.85px;transform:scaleX(0.917);">fffff800`0b117000</span>
<span class="t" style="left:429.4px;top:561.85px;transform:scaleX(0.872);">0x00117000</span>
<span class="t" style="left:523.4px;top:561.85px;transform:scaleX(0.860);">0x64a73187</span>
<span class="t" style="left:617.4px;top:561.85px;transform:scaleX(0.872);">7/7/2023 12:26:31 ...</span>
<span class="t" style="left:711.4px;top:561.85px;transform:scaleX(0.970);">Microsoft</span>
<span class="t" style="left:752.6px;top:560.25px;transform:scaleX(0.896);font-size:8.500px">®</span>
<span class="t" style="left:762.2px;top:561.85px;transform:scaleX(0.926);">Wind...</span>
<span class="t" style="left:805.4px;top:561.85px;transform:scaleX(0.854);">CLIP Service</span>
<span class="t" style="left:899.4px;top:561.85px;transform:scaleX(0.851);">10.0.19041.3208 (W...</span>
<span class="t" style="left:993.4px;top:561.85px;transform:scaleX(0.930);">Microsoft Corpora...</span>
<span class="t" style="left:1087.4px;top:561.85px;transform:scaleX(0.921);">C:\Windows\syste...</span>
<svg class="a" style="left:5.500px;top:577.00px" width="12" height="13" viewBox="0 0 12 13"><path d="M1 .700H7L10.300 4V12.300H1Z" fill="#fdfdfd" stroke="#9a9a9a" stroke-width=".9"/><path d="M7 .700V4H10.300" fill="#e8e8e8" stroke="#9a9a9a" stroke-width=".8"/><circle cx="4.300" cy="5.600" r="1.600" fill="#d5deea" stroke="#4b6f9c" stroke-width="1"/><circle cx="6.400" cy="8" r="1.600" fill="#d5deea" stroke="#4b6f9c" stroke-width="1"/></svg>
<span class="t" style="left:19px;top:576.70px;transform:scaleX(0.900);">cmimcext.sys</span>
<span class="t" style="left:241.4px;top:576.70px;transform:scaleX(0.898);">fffff800`05a60000</span>
<span class="t" style="left:335.4px;top:576.70px;transform:scaleX(0.900);">fffff800`05a6e000</span>
<span class="t" style="left:429.4px;top:576.70px;transform:scaleX(0.862);">0x0000e000</span>
<span class="t" style="left:523.4px;top:576.70px;transform:scaleX(0.874);">0x633c2fe0</span>
<span class="t" style="left:617.4px;top:576.70px;transform:scaleX(0.872);">10/4/2022 4:06:40 ...</span>
<span class="t" style="left:711.4px;top:576.70px;transform:scaleX(0.970);">Microsoft</span>
<span class="t" style="left:752.6px;top:575.10px;transform:scaleX(0.896);font-size:8.500px">®</span>
<span class="t" style="left:762.2px;top:576.70px;transform:scaleX(0.926);">Wind...</span>
<span class="t" style="left:805.4px;top:576.70px;transform:scaleX(0.915);">Kernel Configurati...</span>
<span class="t" style="left:899.4px;top:576.70px;transform:scaleX(0.851);">10.0.19041.1 (WinB...</span>
<span class="t" style="left:993.4px;top:576.70px;transform:scaleX(0.930);">Microsoft Corpora...</span>
<span class="t" style="left:1087.4px;top:576.70px;transform:scaleX(0.921);">C:\Windows\syste...</span>
<svg class="a" style="left:5.500px;top:591.85px" width="12" height="13" viewBox="0 0 12 13"><path d="M1 .700H7L10.300 4V12.300H1Z" fill="#fdfdfd" stroke="#9a9a9a" stroke-width=".9"/><path d="M7 .700V4H10.300" fill="#e8e8e8" stroke="#9a9a9a" stroke-width=".8"/><circle cx="4.300" cy="5.600" r="1.600" fill="#d5deea" stroke="#4b6f9c" stroke-width="1"/><circle cx="6.400" cy="8" r="1.600" fill="#d5deea" stroke="#4b6f9c" stroke-width="1"/></svg>
<span class="t" style="left:19px;top:591.55px;transform:scaleX(0.896);">werkernel.sys</span>
<span class="t" style="left:241.4px;top:591.55px;transform:scaleX(0.909);">fffff800`0b1c0000</span>
<span class="t" style="left:335.4px;top:591.55px;transform:scaleX(0.917);">fffff800`0b1d1000</span>
<span class="t" style="left:429.4px;top:591.55px;transform:scaleX(0.872);">0x00011000</span>
<span class="t" style="left:523.4px;top:591.55px;transform:scaleX(0.898);">0x1bd4610f</span>
<span class="t" style="left:711.4px;top:591.55px;transform:scaleX(0.970);">Microsoft</span>
<span class="t" style="left:752.6px;top:589.95px;transform:scaleX(0.896);font-size:8.500px">®</span>
<span class="t" style="left:762.2px;top:591.55px;transform:scaleX(0.926);">Wind...</span>
<span class="t" style="left:805.4px;top:591.55px;transform:scaleX(0.893);">Windows Error Re...</span>
<span class="t" style="left:899.4px;top:591.55px;transform:scaleX(0.851);">10.0.19041.1 (WinB...</span>
<span class="t" style="left:993.4px;top:591.55px;transform:scaleX(0.930);">Microsoft Corpora...</span>
<span class="t" style="left:1087.4px;top:591.55px;transform:scaleX(0.921);">C:\Windows\syste...</span>
<svg class="a" style="left:5.500px;top:606.70px" width="12" height="13" viewBox="0 0 12 13"><path d="M1 .700H7L10.300 4V12.300H1Z" fill="#fdfdfd" stroke="#9a9a9a" stroke-width=".9"/><path d="M7 .700V4H10.300" fill="#e8e8e8" stroke="#9a9a9a" stroke-width=".8"/><circle cx="4.300" cy="5.600" r="1.600" fill="#d5deea" stroke="#4b6f9c" stroke-width="1"/><circle cx="6.400" cy="8" r="1.600" fill="#d5deea" stroke="#4b6f9c" stroke-width="1"/></svg>
<span class="t" style="left:19px;top:606.40px;transform:scaleX(0.897);">ntosext.sys</span>
<span class="t" style="left:241.4px;top:606.40px;transform:scaleX(0.910);">fffff800`0b1e0000</span>
<span class="t" style="left:335.4px;top:606.40px;transform:scaleX(0.910);">fffff800`0b1ec000</span>
<span class="t" style="left:429.4px;top:606.40px;transform:scaleX(0.861);">0x0000c000</span>
<span class="t" style="left:523.4px;top:606.40px;transform:scaleX(0.899);">0x71dd3c9f</span>
<span class="t" style="left:617.4px;top:606.40px;transform:scaleX(0.872);">7/15/2030 8:39:43 ...</span>
<span class="t" style="left:711.4px;top:606.40px;transform:scaleX(0.970);">Microsoft</span>
<span class="t" style="left:752.6px;top:604.80px;transform:scaleX(0.896);font-size:8.500px">®</span>
<span class="t" style="left:762.2px;top:606.40px;transform:scaleX(0.926);">Wind...</span>
<span class="t" style="left:805.4px;top:606.40px;transform:scaleX(0.892);">NTOS extension h...</span>
<span class="t" style="left:899.4px;top:606.40px;transform:scaleX(0.851);">10.0.19041.1 (WinB...</span>
<span class="t" style="left:993.4px;top:606.40px;transform:scaleX(0.930);">Microsoft Corpora...</span>
<span class="t" style="left:1087.4px;top:606.40px;transform:scaleX(0.921);">C:\Windows\syste...</span>
<svg class="a" style="left:5.500px;top:621.55px" width="12" height="13" viewBox="0 0 12 13"><path d="M1 .700H7L10.300 4V12.300H1Z" fill="#fdfdfd" stroke="#9a9a9a" stroke-width=".9"/><path d="M7 .700V4H10.300" fill="#e8e8e8" stroke="#9a9a9a" stroke-width=".8"/><circle cx="4.300" cy="5.600" r="1.600" fill="#d5deea" stroke="#4b6f9c" stroke-width="1"/><circle cx="6.400" cy="8" r="1.600" fill="#d5deea" stroke="#4b6f9c" stroke-width="1"/></svg>
<span class="t" style="left:19px;top:621.25px;transform:scaleX(0.895);">CI.dll</span>
<span class="t" style="left:241.4px;top:621.25px;transform:scaleX(0.917);">fffff800`0b1f0000</span>
<span class="t" style="left:335.4px;top:621.25px;transform:scaleX(0.917);">fffff800`0b2d9000</span>
<span class="t" style="left:429.4px;top:621.25px;transform:scaleX(0.862);">0x000e9000</span>
<span class="t" style="left:523.4px;top:621.25px;transform:scaleX(0.916);">0xccc5fbdd</span>
<span class="t" style="left:617.4px;top:621.25px;transform:scaleX(0.877);">11/13/2078 4:05:33...</span>
<span class="t" style="left:711.4px;top:621.25px;transform:scaleX(0.970);">Microsoft</span>
<span class="t" style="left:752.6px;top:619.65px;transform:scaleX(0.896);font-size:8.500px">®</span>
<span class="t" style="left:762.2px;top:621.25px;transform:scaleX(0.926);">Wind...</span>
<span class="t" style="left:805.4px;top:621.25px;transform:scaleX(0.934);">Code Integrity Mo...</span>
<span class="t" style="left:899.4px;top:621.25px;transform:scaleX(0.851);">10.0.19041.2075 (W...</span>
<span class="t" style="left:993.4px;top:621.25px;transform:scaleX(0.930);">Microsoft Corpora...</span>
<span class="t" style="left:1087.4px;top:621.25px;transform:scaleX(0.921);">C:\Windows\syste...</span>
<div class="a" style="left:1185.5px;top:349px;width:13px;height:280px;background:#f0f0f0;"></div>
<div class="a" style="left:1186px;top:362.7px;width:12px;height:20.5px;background:#cdcdcd;"></div>
<svg class="a" style="left:1185.500px;top:349px" width="13" height="13"><path d="M3.300 9L6.300 6 9.300 9" stroke="#404040" stroke-width="1.300" fill="none"/></svg>
<svg class="a" style="left:1185.500px;top:616px" width="13" height="13"><path d="M3.300 4.200L6.300 7.200 9.300 4.200" stroke="#404040" stroke-width="1.300" fill="none"/></svg>
<div class="a" style="left:1px;top:628.5px;width:1197.5px;height:18.7px;background:#f0f0f0;"></div>
<div class="a" style="left:1px;top:628.5px;width:1197.5px;height:1px;background:#a0a0a0;"></div>
<div class="a" style="left:235px;top:631.5px;width:1px;height:14px;background:#d0d0d0;"></div>
<span class="t" style="left:3px;top:633.50px;transform:scaleX(0.877);">1 Crashes, 1 Selected</span>
<span class="t" style="left:242.300px;top:631.30px;font-size:8.6px;font-weight:bold;color:#1414b8;transform:scaleX(1.067)">NirSoft Freeware.  http://www.nirsoft.net</span>
<svg class="a" style="left:1188px;top:637px" width="10" height="10"><g fill="#b4b4b4"><rect x="7" y="7" width="1.500" height="1.500"/><rect x="7" y="4.500" width="1.500" height="1.500"/><rect x="7" y="2" width="1.500" height="1.500"/><rect x="4.500" y="7" width="1.500" height="1.500"/><rect x="4.500" y="4.500" width="1.500" height="1.500"/><rect x="2" y="7" width="1.500" height="1.500"/></g></svg>
<div class="a" style="left:83.75px;top:39.75px;width:275px;height:94px;background:#f2f2f2;box-shadow:inset 0 0 0 1px #cfcfcf, 2px 2px 2.500px rgba(0,0,0,.42)"></div>
<div class="a" style="left:85.6px;top:59.1px;width:271.3px;height:16.7px;background:#91c9f7;"></div>
<div class="a" style="left:85.6px;top:59.1px;width:17px;height:16.7px;background:#56b0fa;"></div>
<svg class="a" style="left:89px;top:62px" width="12" height="10"><path d="M1.800 5L4.300 7.600 9.600 2" stroke="#0c2c4a" stroke-width="1.100" fill="none"/></svg>
<span class="t" style="left:110.3px;top:44.00px;transform:scaleX(0.918);">Lower Pane Mode</span>
<span class="t" style="left:110.3px;top:61.40px;transform:scaleX(0.907);">Mark Drivers Found In Crash Stack</span>
<span class="t" style="left:110.3px;top:78.60px;transform:scaleX(0.911);">Show Time In GMT</span>
<span class="t" style="left:110.3px;top:95.80px;transform:scaleX(0.923);">Add Header Line To CSV/Tab-Delimited File</span>
<span class="t" style="left:110.3px;top:118.40px;transform:scaleX(0.933);">Advanced Options</span>
<span class="t" style="left:315px;top:118.40px;transform:scaleX(0.960);">Ctrl+O</span>
<svg class="a" style="left:344px;top:45px" width="8" height="10"><path d="M2.700 2.300L5.700 5 2.700 7.700" stroke="#222" stroke-width="1.200" fill="none"/></svg>
<div class="a" style="left:106px;top:113.2px;width:251px;height:1px;background:#dcdcdc;"></div>
<svg class="a" style="left:315px;top:66px" width="12" height="18" viewBox="0 0 12 18"><path d="M1.300 1.300V12.800L3.900 10.400L5.900 15.200L7.900 14.400L5.900 9.700H9.600Z" fill="#fff" stroke="#000" stroke-width="1.100"/></svg>
</body></html>
